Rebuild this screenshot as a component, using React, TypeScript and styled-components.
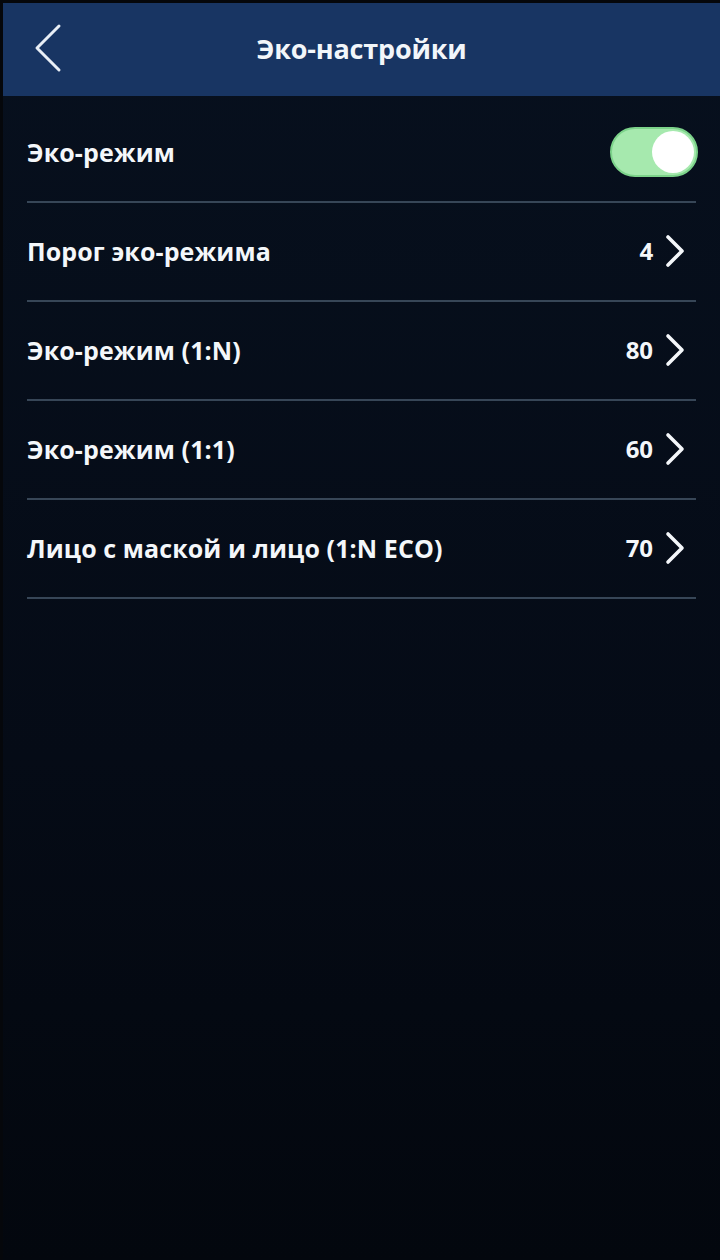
import React from 'react';
import styled, { createGlobalStyle } from 'styled-components';

const GlobalStyle = createGlobalStyle`
	html, body {
		margin: 0;
		padding: 0;
		background: #060c17;
	}
	body {
		font-family: 'Open Sans', 'Noto Sans', sans-serif;
	}
`;

const Screen = styled.div`
	background: linear-gradient(180deg, #07101e 0%, #050b16 60%, #03070e 100%);
	border-left: 3px solid #05070b;
	border-top: 3px solid #05070b;
	box-sizing: border-box;
	display: flex;
	flex-direction: column;
	height: 1260px;
	width: 720px;
`;

const Header = styled.header`
	align-items: center;
	background: #183563;
	display: flex;
	height: 93px;
	justify-content: center;
	position: relative;
`;

const BackButton = styled.button`
	background: none;
	border: none;
	cursor: pointer;
	height: 52px;
	left: 25px;
	padding: 0;
	position: absolute;
	top: 19px;
	width: 40px;
`;

const Title = styled.h1`
	color: #f2f6fa;
	font-size: 27px;
	font-weight: 700;
	letter-spacing: -0.2px;
	margin: 0 0 2px;
`;

const List = styled.div`
	display: flex;
	flex-direction: column;
	padding: 8px 24px 0 24px;
`;

const Row = styled.div`
	align-items: center;
	border-bottom: 2px solid #374657;
	box-sizing: border-box;
	display: flex;
	height: 99px;
	justify-content: space-between;
	padding-bottom: 2px;
`;

const Label = styled.span`
	color: #f4f7fa;
	font-size: 25px;
	font-weight: 700;
	letter-spacing: 0.1px;
`;

const ValueBox = styled.div`
	align-items: center;
	display: flex;
	gap: 12px;
	padding-right: 11px;
`;

const Value = styled.span`
	color: #f4f7fa;
	font-size: 24px;
	font-weight: 700;
	letter-spacing: -0.1px;
`;

const Toggle = styled.div<{ on: boolean }>`
	background: ${(props) => (props.on ? '#a6e9ae' : '#4a5563')};
	border: 2px solid ${(props) => (props.on ? '#7cd38a' : '#3a4452')};
	border-radius: 26px;
	box-sizing: border-box;
	height: 50px;
	margin-right: -2px;
	position: relative;
	width: 88px;
`;

const Knob = styled.div<{ on: boolean }>`
	background: #ffffff;
	border-radius: 50%;
	height: 42px;
	left: ${(props) => (props.on ? '40px' : '2px')};
	position: absolute;
	top: 2px;
	width: 42px;
`;

const Chevron = () => (
	<svg width="20" height="34" viewBox="0 0 20 34" fill="none">
		<path d="M3 3 L17 17 L3 31" stroke="#f4f7fa" strokeWidth="3.6" strokeLinecap="round" strokeLinejoin="round" />
	</svg>
);

const BackIcon = () => (
	<svg width="40" height="52" viewBox="0 0 40 52" fill="none">
		<path d="M31 4 L9 26 L31 48" stroke="#e8eef6" strokeWidth="3" strokeLinecap="round" strokeLinejoin="round" />
	</svg>
);

const items = [
	{ label: 'Порог эко-режима', value: '4' },
	{ label: 'Эко-режим (1:N)', value: '80' },
	{ label: 'Эко-режим (1:1)', value: '60' },
	{ label: 'Лицо с маской и лицо (1:N ECO)', value: '70' },
];

export default function App() {
	const ecoOn = true;
	return (
		<>
			<GlobalStyle />
			<Screen>
				<Header>
					<BackButton aria-label="Назад">
						<BackIcon />
					</BackButton>
					<Title>Эко-настройки</Title>
				</Header>
				<List>
					<Row>
						<Label>Эко-режим</Label>
						<Toggle on={ecoOn}>
							<Knob on={ecoOn} />
						</Toggle>
					</Row>
					{items.map((item) => (
						<Row key={item.label}>
							<Label>{item.label}</Label>
							<ValueBox>
								<Value>{item.value}</Value>
								<Chevron />
							</ValueBox>
						</Row>
					))}
				</List>
			</Screen>
		</>
	);
}
